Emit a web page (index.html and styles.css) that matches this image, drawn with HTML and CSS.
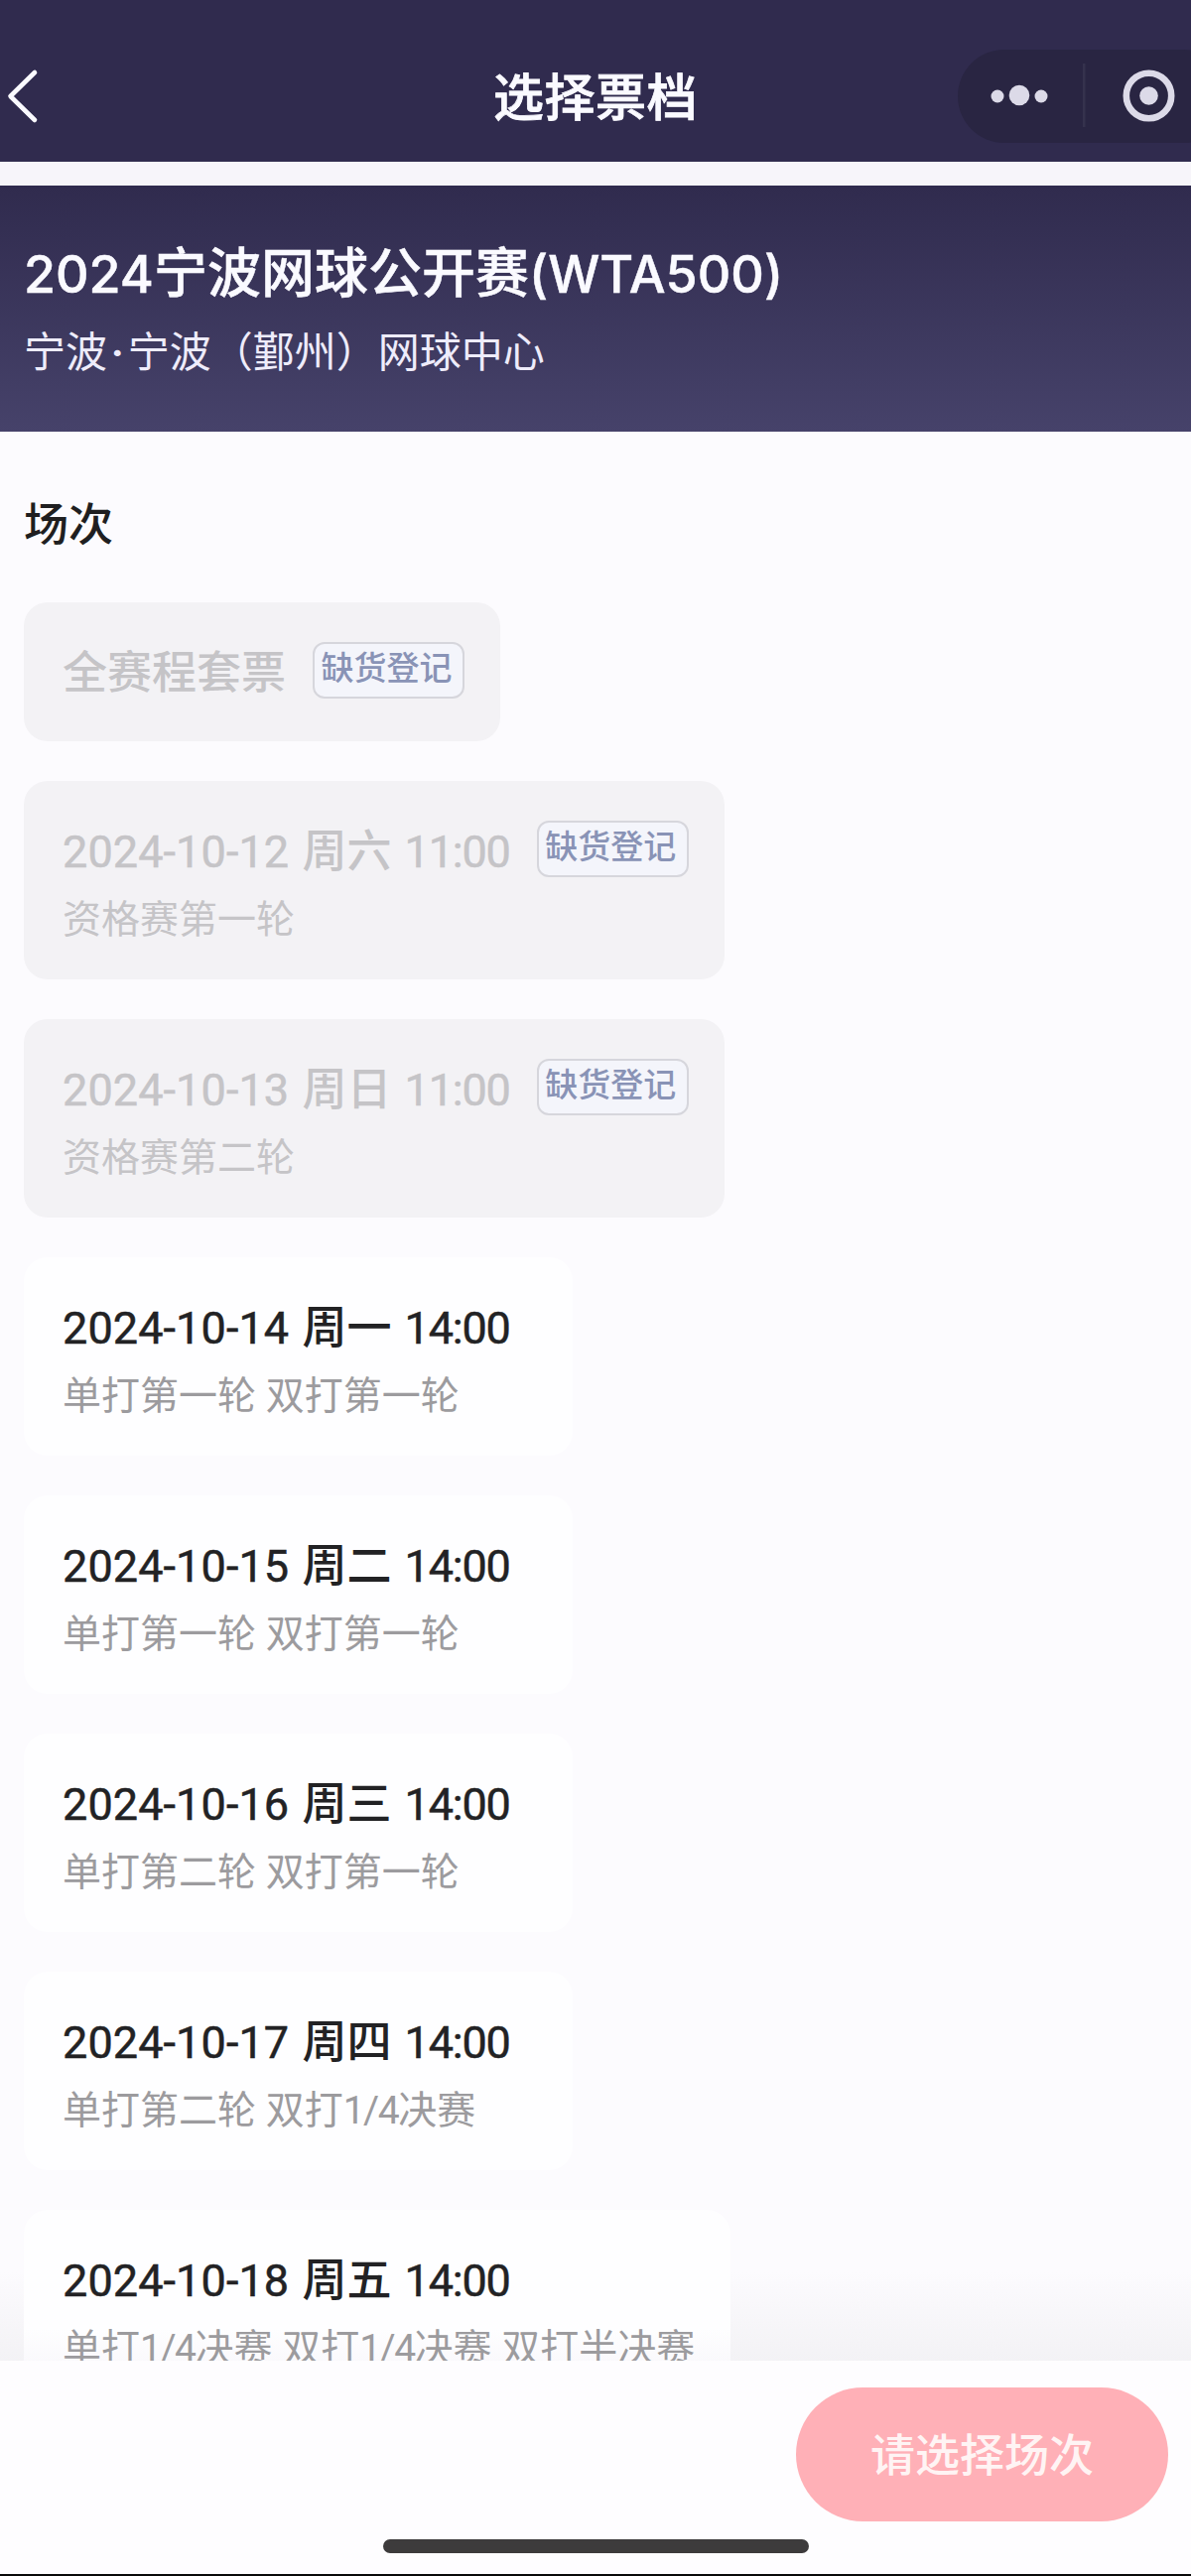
FILE: index.html
```html
<!DOCTYPE html>
<html lang="zh-CN">
<head>
  <meta charset="UTF-8">
  <title>选择票档</title>
  <link rel="stylesheet" href="styles.css">
</head>
<body>
  <div class="page">

    <!-- Nav bar -->
    <div class="navbar">
      <svg class="back" width="34" height="56" viewBox="0 0 34 56">
        <path d="M29 4 L4.500 28 L29 52" fill="none" stroke="#fafaff" stroke-width="4.6" stroke-linecap="round" stroke-linejoin="round"/>
      </svg>
      <div class="nav-title">选择票档</div>
      <div class="capsule">
        <svg width="275" height="94" viewBox="0 0 275 94">
          <g fill="#dcdae8">
            <circle cx="40" cy="47" r="6.5"/>
            <circle cx="62" cy="46" r="10.3"/>
            <circle cx="84" cy="47" r="6.5"/>
            <circle cx="192.500" cy="46.500" r="9.3"/>
          </g>
          <rect x="126" y="14" width="2.5" height="64" fill="#35324d"/>
          <circle cx="192.500" cy="46.500" r="22.700" fill="none" stroke="#dcdae8" stroke-width="6.6"/>
        </svg>
      </div>
    </div>

    <!-- Event info -->
    <div class="event">
      <h1><span class="latin">2024</span>宁波网球公开赛<span class="latin">(WTA500)</span></h1>
      <p>宁波<span class="dot">·</span>宁波（鄞州）网球中心</p>
    </div>

    <!-- Sessions -->
    <div class="sessions">
      <h2>场次</h2>

      <div class="card soldout single">
        <div class="row"><span class="time">全赛程套票</span><span class="tag">缺货登记</span></div>
      </div>
      <div class="card soldout">
        <div class="row"><span class="time"><span class="date">2024-10-12</span> 周六 <span class="hour">11:00</span></span><span class="tag">缺货登记</span></div>
        <div class="desc">资格赛第一轮</div>
      </div>
      <div class="card soldout">
        <div class="row"><span class="time"><span class="date">2024-10-13</span> 周日 <span class="hour">11:00</span></span><span class="tag">缺货登记</span></div>
        <div class="desc">资格赛第二轮</div>
      </div>
      <div class="card">
        <div class="row"><span class="time"><span class="date">2024-10-14</span> 周一 <span class="hour">14:00</span></span></div>
        <div class="desc">单打第一轮 双打第一轮</div>
      </div>
      <div class="card">
        <div class="row"><span class="time"><span class="date">2024-10-15</span> 周二 <span class="hour">14:00</span></span></div>
        <div class="desc">单打第一轮 双打第一轮</div>
      </div>
      <div class="card">
        <div class="row"><span class="time"><span class="date">2024-10-16</span> 周三 <span class="hour">14:00</span></span></div>
        <div class="desc">单打第二轮 双打第一轮</div>
      </div>
      <div class="card">
        <div class="row"><span class="time"><span class="date">2024-10-17</span> 周四 <span class="hour">14:00</span></span></div>
        <div class="desc">单打第二轮 双打<span class="frac">1/4</span>决赛</div>
      </div>
      <div class="card last">
        <div class="row"><span class="time"><span class="date">2024-10-18</span> 周五 <span class="hour">14:00</span></span></div>
        <div class="desc">单打<span class="frac">1/4</span>决赛 双打<span class="frac">1/4</span>决赛 双打半决赛</div>
      </div>
    </div>

    <!-- Bottom bar -->
    <div class="footer">
      <button class="submit">请选择场次</button>
      <div class="home-bar"></div>
    </div>

  </div>
</body>
</html>
```

FILE: styles.css
```css
* {
  box-sizing: border-box;
}

body {
  margin: 0;
  font-family: "Noto Sans CJK SC", sans-serif;
  background-color: #fcfbfe;
}

h1, h2, p {
  margin: 0;
}

.page {
  width: 1200px;
  height: 2596px;
  display: flex;
  flex-direction: column;
  overflow: hidden;
  border-bottom: 2px solid #0a0a0a;
}

.navbar {
  flex: none;
  height: 163px;
  padding-top: 31px;
  display: grid;
  grid-template-columns: 497px 206px 1fr;
  align-items: center;
  overflow: hidden;
  background-color: #302b4e;
}

.back {
  margin-left: 6px;
}

.nav-title {
  margin-top: -4px;
  color: #fafaff;
  font-size: 51px;
  font-weight: 500;
  line-height: 60px;
  letter-spacing: 0.5px;
  white-space: nowrap;
  -webkit-text-stroke: 0.8px #fafaff;
}

.capsule {
  width: 275px;
  height: 94px;
  margin-left: 262px;
  border-radius: 47px;
  background-color: #292542;
}

.event {
  flex: none;
  height: 272px;
  padding: 50px 24px 0;
  border-top: 24px solid #f7f5fa;
  background: linear-gradient(#302b4e, #46426a) padding-box;
  color: #fafaff;
}

.event h1 {
  font-size: 54px;
  font-weight: 500;
  line-height: 70px;
  -webkit-text-stroke: 0.5px #fafaff;
}

.event .latin {
  font-family: Inter, sans-serif;
  font-size: 52px;
}

.event p {
  margin-top: 12px;
  font-size: 42px;
  line-height: 56px;
  color: #eeecfb;
}

.event .dot {
  padding: 0 4px;
  font-family: Roboto, sans-serif;
  font-weight: 700;
}

.sessions {
  flex: 1;
  min-height: 0;
  overflow: hidden;
  padding: 61px 24px 0;
  display: flex;
  flex-direction: column;
  align-items: flex-start;
  gap: 40px;
  background: linear-gradient(rgba(243, 242, 245, 0), #f3f2f5) bottom / 100% 90px no-repeat #fcfbfe;
}

.sessions h2 {
  margin-bottom: 11px;
  font-size: 45px;
  font-weight: 500;
  line-height: 60px;
  color: #1f1f21;
}

.card {
  flex: none;
  height: 200px;
  padding: 40px 36px 0 39px;
  border-radius: 24px;
  background-color: #fefeff;
}

.card.soldout {
  background-color: #f3f2f5;
}

.card.single {
  height: 140px;
}

.card.last {
  background: linear-gradient(#fefeff 120px, #faf9fc 152px);
}

.row {
  height: 60px;
  display: flex;
  align-items: flex-start;
}

.time {
  margin-right: 27px;
  padding-top: 2px;
  font-family: Roboto, "Noto Sans CJK SC", sans-serif;
  font-size: 45px;
  font-weight: 500;
  line-height: 60px;
  word-spacing: 2px;
  white-space: nowrap;
  color: #222224;
}

.date,
.hour {
  font-weight: 400;
  letter-spacing: 0.1px;
  -webkit-text-stroke: 0.5px currentColor;
}

.hour {
  letter-spacing: -1.2px;
}

.desc {
  margin-top: 11px;
  font-family: Roboto, "Noto Sans CJK SC", sans-serif;
  font-size: 39px;
  line-height: 58px;
  white-space: nowrap;
  color: #9c9b9e;
}

.frac {
  letter-spacing: -1.5px;
}

.soldout .time {
  color: #c5c4c7;
}

.soldout .desc {
  color: #c5c4c7;
}

.tag {
  width: 153px;
  height: 57px;
  padding-right: 4px;
  border: 2px solid #d6d6dc;
  border-radius: 12px;
  background-color: #f4f5fb;
  color: #8993b6;
  font-size: 33px;
  font-weight: 500;
  line-height: 45px;
  text-align: center;
  white-space: nowrap;
}

.footer {
  flex: none;
  height: 215px;
  padding: 27px 23px 0;
  display: flex;
  flex-direction: column;
  align-items: flex-end;
  background-color: #fefdff;
}

.submit {
  width: 375px;
  height: 135px;
  padding: 0 0 4px;
  border: none;
  border-radius: 68px;
  background-color: #ffb0b7;
  color: #fff4f4;
  font-family: inherit;
  font-size: 45px;
  font-weight: 500;
}

.home-bar {
  width: 429px;
  height: 14px;
  margin: 18px auto 0;
  border-radius: 7px;
  background-color: #3d3b3c;
}
```
